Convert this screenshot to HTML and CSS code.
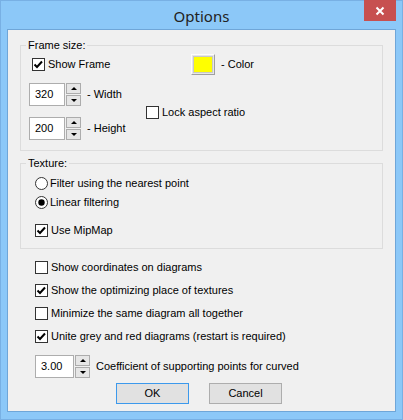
FILE: index.html
```html
<!DOCTYPE html>
<html>
<head>
<meta charset="utf-8">
<link rel="stylesheet" href="styles.css">
</head>
<body>
<div class="window">
  <div class="titlebar">
    <span></span>
    <div class="title">Options</div>
    <div class="close">
      <svg width="10" height="10" viewBox="0 0 10 10"><path d="M1.5 1.5 L8.5 8.5 M8.5 1.5 L1.5 8.5" stroke="#fff" stroke-width="2" fill="none"/></svg>
    </div>
  </div>
  <div class="client">
    <fieldset class="group frame">
      <legend>Frame size:</legend>
      <div class="frame-grid">
        <label class="check show-frame">
          <svg class="box" width="13" height="13" viewBox="0 0 13 13"><rect x="0.5" y="0.5" width="12" height="12" fill="#fff" stroke="#333"/><path d="M2.5 6.5 L5 9 L10 3.5" stroke="#000" stroke-width="2" fill="none"/></svg>
          <span>Show Frame</span>
        </label>
        <div class="color-row">
          <span class="color-btn"><span class="swatch"></span></span>
          <span>- Color</span>
        </div>
        <div class="spinrow r2">
          <div class="edit">320</div>
          <div class="spinner"><div class="sb"><i class="up"></i></div><div class="sb"><i class="down"></i></div></div>
          <span class="spin-label">- Width</span>
        </div>
        <div class="spinrow r3">
          <div class="edit">200</div>
          <div class="spinner"><div class="sb"><i class="up"></i></div><div class="sb"><i class="down"></i></div></div>
          <span class="spin-label">- Height</span>
        </div>
        <label class="check lock">
          <svg class="box" width="13" height="13" viewBox="0 0 13 13"><rect x="0.5" y="0.5" width="12" height="12" fill="#fff" stroke="#333"/></svg>
          <span>Lock aspect ratio</span>
        </label>
      </div>
    </fieldset>

    <fieldset class="group texture">
      <legend>Texture:</legend>
      <label class="radio">
        <svg width="13" height="13" viewBox="0 0 13 13"><circle cx="6.5" cy="6.5" r="6" fill="#fff" stroke="#333"/></svg>
        <span>Filter using the nearest point</span>
      </label>
      <label class="radio second">
        <svg width="13" height="13" viewBox="0 0 13 13"><circle cx="6.5" cy="6.5" r="6" fill="#fff" stroke="#333"/><circle cx="6.5" cy="6.5" r="3.2" fill="#000"/></svg>
        <span>Linear filtering</span>
      </label>
      <label class="check mipmap">
        <svg class="box" width="13" height="13" viewBox="0 0 13 13"><rect x="0.5" y="0.5" width="12" height="12" fill="#fff" stroke="#333"/><path d="M2.5 6.5 L5 9 L10 3.5" stroke="#000" stroke-width="2" fill="none"/></svg>
        <span>Use MipMap</span>
      </label>
    </fieldset>

    <div class="options">
      <label class="check">
        <svg class="box" width="13" height="13" viewBox="0 0 13 13"><rect x="0.5" y="0.5" width="12" height="12" fill="#fff" stroke="#333"/></svg>
        <span>Show coordinates on diagrams</span>
      </label>
      <label class="check">
        <svg class="box" width="13" height="13" viewBox="0 0 13 13"><rect x="0.5" y="0.5" width="12" height="12" fill="#fff" stroke="#333"/><path d="M2.5 6.5 L5 9 L10 3.5" stroke="#000" stroke-width="2" fill="none"/></svg>
        <span>Show the optimizing place of textures</span>
      </label>
      <label class="check">
        <svg class="box" width="13" height="13" viewBox="0 0 13 13"><rect x="0.5" y="0.5" width="12" height="12" fill="#fff" stroke="#333"/></svg>
        <span>Minimize the same diagram all together</span>
      </label>
      <label class="check">
        <svg class="box" width="13" height="13" viewBox="0 0 13 13"><rect x="0.5" y="0.5" width="12" height="12" fill="#fff" stroke="#333"/><path d="M2.5 6.5 L5 9 L10 3.5" stroke="#000" stroke-width="2" fill="none"/></svg>
        <span>Unite grey and red diagrams (restart is required)</span>
      </label>
      <div class="spinrow coef">
        <div class="edit wide">3.00</div>
        <div class="spinner"><div class="sb"><i class="up"></i></div><div class="sb"><i class="down"></i></div></div>
        <span class="spin-label">Coefficient of supporting points for curved</span>
      </div>
    </div>

    <div class="buttons">
      <div class="btn default">OK</div>
      <div class="btn">Cancel</div>
    </div>
  </div>
</div>
</body>
</html>
```

FILE: styles.css
```css
html, body {
  margin: 0;
  padding: 0;
}
body {
  font-family: "Liberation Sans", Arial, sans-serif;
  font-size: 11px;
  line-height: 13px;
  color: #000;
  width: 403px;
  height: 420px;
  overflow: hidden;
}
.window {
  width: 403px;
  height: 420px;
  box-sizing: border-box;
  background: #8cc8f8;
  border: 1px solid #78b0e4;
  padding: 0 6px 7px 6px;
  display: flex;
  flex-direction: column;
}
.titlebar {
  height: 28px;
  display: grid;
  grid-template-columns: 1fr auto 1fr;
  align-items: center;
}
.title {
  font-family: "Noto Sans", "Open Sans", sans-serif;
  font-size: 15px;
  color: #222;
  padding-top: 2px;
}
.close {
  justify-self: end;
  align-self: start;
  margin-top: -1px;
  width: 32px;
  height: 21px;
  background: #c75050;
  display: flex;
  align-items: center;
  justify-content: center;
}
.close svg {
  display: block;
}
.client {
  flex: 1;
  background: #f0f0f0;
  border: 1px solid #6fa6d8;
  display: flex;
  flex-direction: column;
}
.group {
  border: 1px solid #dcdcdc;
  margin: 0 12px 0 12px;
  min-width: 0;
}
.group legend {
  padding: 0 2px;
  line-height: 13px;
}
.frame {
  margin-top: 9px;
  padding: 2px 0 10px 8px;
}
.frame legend {
  margin-left: -3px;
}
.texture {
  margin-top: 6px;
  padding: 6px 0 10px 14px;
}
.texture legend {
  margin-left: -9px;
}
.frame-grid {
  display: grid;
  grid-template-columns: 117px auto;
  grid-template-rows: 20px 32px 34px;
}
.check, .radio {
  display: flex;
  align-items: center;
  height: 15px;
  gap: 3px;
}
.radio {
  gap: 2px;
}
.check svg, .radio svg {
  display: block;
  flex: none;
}
.show-frame {
  grid-column: 1;
  grid-row: 1;
  align-self: center;
  margin-left: 3px;
}
.color-row {
  grid-column: 2;
  grid-row: 1;
  display: flex;
  align-items: center;
  gap: 6px;
  margin-left: 45px;
}
.color-btn {
  width: 24px;
  height: 21px;
  box-sizing: border-box;
  border: 1px solid;
  border-color: #fdfdfd #a0a0a0 #a0a0a0 #fdfdfd;
  background: #e6e6e6;
  padding: 1px;
  display: flex;
}
.swatch {
  flex: 1;
  background: #ffff00;
  border: 1px solid #c8c8c8;
}
.spinrow {
  display: flex;
  align-items: center;
}
.r2 {
  grid-column: 1 / span 2;
  grid-row: 2;
  margin-top: 9px;
}
.r3 {
  grid-column: 1 / span 2;
  grid-row: 3;
  margin-top: 11px;
}
.lock {
  grid-column: 2;
  grid-row: 2 / span 2;
  align-self: center;
  margin-top: 11px;
}
.edit {
  width: 36px;
  height: 23px;
  box-sizing: border-box;
  border: 1px solid #adadad;
  background: #fff;
  padding-left: 5px;
  display: flex;
  align-items: center;
}
.edit.wide {
  width: 39px;
}
.spinner {
  margin-left: 1px;
  width: 15px;
  height: 23px;
  display: flex;
  flex-direction: column;
  gap: 1px;
}
.sb {
  flex: 1;
  box-sizing: border-box;
  border: 1px solid #acacac;
  background: #e6e6e6;
  display: flex;
  align-items: center;
  justify-content: center;
}
.sb i {
  display: block;
  width: 0;
  height: 0;
  border-left: 3px solid transparent;
  border-right: 3px solid transparent;
}
.sb i.up {
  border-bottom: 3px solid #000;
}
.sb i.down {
  border-top: 3px solid #000;
}
.spin-label {
  margin-left: 6px;
}
.second {
  margin-top: 4px;
}
.mipmap {
  margin-top: 13px;
}
.options {
  padding-left: 27px;
  margin-top: 11px;
  display: flex;
  flex-direction: column;
  gap: 8px;
}
.coef {
  margin-top: 3px;
}
.buttons {
  display: flex;
  gap: 20px;
  padding-left: 108px;
  margin-top: 5px;
}
.btn {
  width: 73px;
  height: 21px;
  box-sizing: border-box;
  border: 1px solid #adadad;
  background: #e1e1e1;
  display: flex;
  align-items: center;
  justify-content: center;
}
.btn.default {
  border-color: #3c99ec;
}
```
